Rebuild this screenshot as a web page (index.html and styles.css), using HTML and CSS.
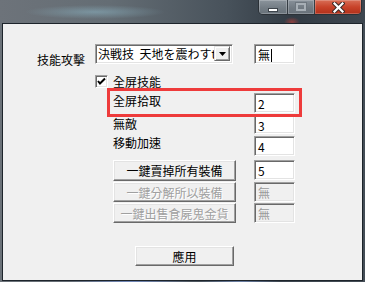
FILE: index.html
```html
<!DOCTYPE html>
<html lang="zh-Hant">
<head>
    <meta charset="UTF-8">
    <meta name="viewport" content="width=device-width, initial-scale=1.0">
    <title>設定</title>
    <link rel="stylesheet" href="styles.css">
</head>
<body>
    <div class="window">
        <div class="titlebar">
            <div class="caption">
                <span class="cap-btn cap-min"><span class="glyph-min"></span></span>
                <span class="cap-btn cap-max"><span class="glyph-max"></span></span>
                <span class="cap-btn cap-close">
                    <svg width="13" height="11" viewBox="0 0 13 11">
                        <path d="M2.5 1.5 L10.5 9.5 M10.5 1.5 L2.5 9.5" stroke="#3a2a28" stroke-width="4.2" stroke-linecap="square"/>
                        <path d="M2.5 1.5 L10.5 9.5 M10.5 1.5 L2.5 9.5" stroke="#ffffff" stroke-width="2.2" stroke-linecap="square"/>
                    </svg>
                </span>
            </div>
        </div>

        <div class="frame">
            <div class="dialog">
                <div class="lbl-skill">技能攻擊</div>
                <div class="combo">
                    <div class="combo-text">決戦技&nbsp;&nbsp;天地を震わすt</div>
                    <div class="combo-btn">
                        <svg width="7" height="4" viewBox="0 0 7 4"><polygon points="0,0 7,0 3.5,4" fill="#000"/></svg>
                    </div>
                </div>
                <div class="edit edit-skill">無<span class="caret"></span></div>

                <label class="check">
                    <span class="check-box">
                        <svg width="9" height="9" viewBox="0 0 9 9"><polyline points="1,4 3,6.5 8,1.5" fill="none" stroke="#000" stroke-width="2"/></svg>
                    </span>
                    全屏技能
                </label>

                <div class="lbl lbl-pick">全屏拾取</div>
                <div class="edit edit-pick">2</div>

                <div class="lbl lbl-god">無敵</div>
                <div class="edit edit-god">3</div>

                <div class="lbl lbl-speed">移動加速</div>
                <div class="edit edit-speed">4</div>

                <button class="btn btn-sell">一鍵賣掉所有裝備</button>
                <div class="edit edit-sell">5</div>

                <button class="btn btn-break" disabled>一鍵分解所以裝備</button>
                <div class="edit edit-break disabled">無</div>

                <button class="btn btn-gold" disabled>一鍵出售食屍鬼金貨</button>
                <div class="edit edit-gold disabled">無</div>

                <button class="btn btn-apply">應用</button>
            </div>
        </div>

        <div class="highlight"></div>
    </div>
</body>
</html>
```

FILE: styles.css
```css
* {
    box-sizing: border-box;
}
html, body {
    margin: 0;
}
body {
    width: 365px;
    height: 282px;
    overflow: hidden;
    font-family: "Noto Sans CJK JP", "Noto Sans CJK TC", "Liberation Sans", sans-serif;
    font-size: 12px;
    color: #000;
}
.window {
    position: relative;
    height: 282px;
    background:
        radial-gradient(ellipse 60px 6px at 130px 281px, rgba(120, 150, 220, 0.7), transparent),
        radial-gradient(ellipse 40px 5px at 240px 281px, rgba(140, 170, 230, 0.6), transparent),
        linear-gradient(90deg, #6b7279 0%, #5d666e 40%, #3a434c 70%, #444d56 100%);
}

/* title bar (aero glass) */
.titlebar {
    height: 23px;
    display: flex;
    justify-content: flex-end;
    padding-right: 3px;
    background:
        radial-gradient(ellipse 8px 5px at 292px 22px, rgba(220, 70, 60, 0.55), transparent),
        radial-gradient(ellipse 70px 7px at 95px 12px, rgba(140, 180, 195, 0.55), transparent),
        linear-gradient(90deg, #6d737a 0%, #646d74 30%, #48525b 62%, #323b44 80%, #3d464f 100%);
}
.caption {
    display: flex;
    height: 15px;
    border: 1px solid #2b3137;
    border-top: none;
    border-radius: 0 0 5px 5px;
    overflow: hidden;
}
.cap-btn {
    height: 100%;
    display: flex;
    align-items: center;
    justify-content: center;
    border-right: 1px solid #353c43;
    box-shadow: inset 0 0 0 1px rgba(255, 255, 255, 0.22);
}
.cap-min {
    width: 29px;
    background: linear-gradient(#8b949c, #747d85 55%, #68727a);
}
.cap-max {
    width: 27px;
    background: linear-gradient(#88919a, #727b83 55%, #68717a);
}
.cap-close {
    width: 46px;
    border-right: none;
    background: linear-gradient(#d86e57, #c8432a 50%, #b2301a);
}
.glyph-min {
    width: 10px;
    height: 4px;
    margin-top: 6px;
    background: #fff;
    border: 1px solid #3d444b;
}
.glyph-max {
    width: 10px;
    height: 8px;
    border: 2px solid #a7afb6;
    box-shadow: 0 0 0 1px #6d767e;
}

/* window body */
.frame {
    margin: 0 2px;
    height: 258px;
    border: 1px solid #1d242b;
    background: #f0f0f0;
}
.dialog {
    display: grid;
    grid-template-columns: 92px 18px 123px 18px 41px;
    grid-template-rows: 31px 18px 22px 21px 24px 22px 21px 43px 20px;
    padding-top: 20px;
    line-height: 13px;
}

.lbl-skill {
    grid-column: 1;
    grid-row: 1;
    align-self: center;
    text-align: right;
    padding-right: 10px;
}
.lbl {
    grid-column: 3;
}
.lbl-pick { grid-row: 3; padding-top: 1px; }
.lbl-god { grid-row: 4; padding-top: 2px; }
.lbl-speed { grid-row: 5; }

/* sunken edit */
.edit {
    grid-column: 5;
    height: 20px;
    padding: 2px 3px;
    line-height: 15px;
    background: #fff;
    border: 1px solid;
    border-color: #a0a0a0 #fff #fff #a0a0a0;
    box-shadow: inset 1px 1px 0 #696969, inset -1px -1px 0 #e3e3e3;
}
.edit.disabled {
    background: #f0f0f0;
    color: #9a9a9a;
}
.edit-skill { grid-row: 1; }
.edit-pick { grid-row: 3; }
.edit-god { grid-row: 4; height: 19px; }
.edit-speed { grid-row: 5; }
.edit-sell { grid-row: 6; }
.edit-break { grid-row: 7; }
.edit-gold { grid-row: 8; }
.caret {
    display: inline-block;
    width: 1px;
    height: 13px;
    margin-left: 1px;
    vertical-align: -2px;
    background: #000;
}

/* combo box */
.combo {
    grid-column: 2 / 4;
    grid-row: 1;
    width: 138px;
    height: 20px;
    display: flex;
    background: #fff;
    border: 1px solid;
    border-color: #a0a0a0 #fff #fff #a0a0a0;
    box-shadow: inset 1px 1px 0 #696969, inset -1px -1px 0 #e3e3e3;
    padding: 1px 2px 2px 1px;
}
.combo-text {
    flex: 1;
    overflow: hidden;
    white-space: nowrap;
    padding-left: 1px;
    line-height: 16px;
}
.combo-btn {
    width: 16px;
    display: flex;
    align-items: center;
    justify-content: center;
    background: #f0f0f0;
    border: 1px solid;
    border-color: #e3e3e3 #696969 #696969 #e3e3e3;
    box-shadow: inset 1px 1px 0 #fff, inset -1px -1px 0 #a0a0a0;
}

/* checkbox */
.check {
    grid-column: 2 / 4;
    grid-row: 2;
    display: flex;
    align-items: center;
    gap: 5px;
    align-self: start;
}
.check-box {
    width: 13px;
    height: 13px;
    display: flex;
    align-items: center;
    justify-content: center;
    background: #fff;
    border: 1px solid;
    border-color: #a0a0a0 #fff #fff #a0a0a0;
    box-shadow: inset 1px 1px 0 #696969, inset -1px -1px 0 #e3e3e3;
}

/* raised buttons */
.btn {
    grid-column: 3;
    height: 21px;
    padding: 0;
    font: inherit;
    color: #000;
    line-height: 17px;
    text-align: center;
    background: #f0f0f0;
    border: 1px solid;
    border-color: #fff #696969 #696969 #fff;
    box-shadow: inset -1px -1px 0 #a0a0a0, inset 1px 1px 0 #e3e3e3;
}
.btn:disabled {
    color: #a0a0a0;
    text-shadow: 1px 1px 0 #fff;
}
.btn-sell { grid-row: 6; }
.btn-break { grid-row: 7; height: 20px; }
.btn-gold { grid-row: 8; height: 20px; align-self: start; }
.btn-apply {
    grid-row: 9;
    width: 99px;
    height: 20px;
    margin-left: 22px;
}

/* red annotation box */
.highlight {
    position: absolute;
    left: 107px;
    top: 88px;
    width: 195px;
    height: 29px;
    border: 3px solid #ee3b3b;
}
```
